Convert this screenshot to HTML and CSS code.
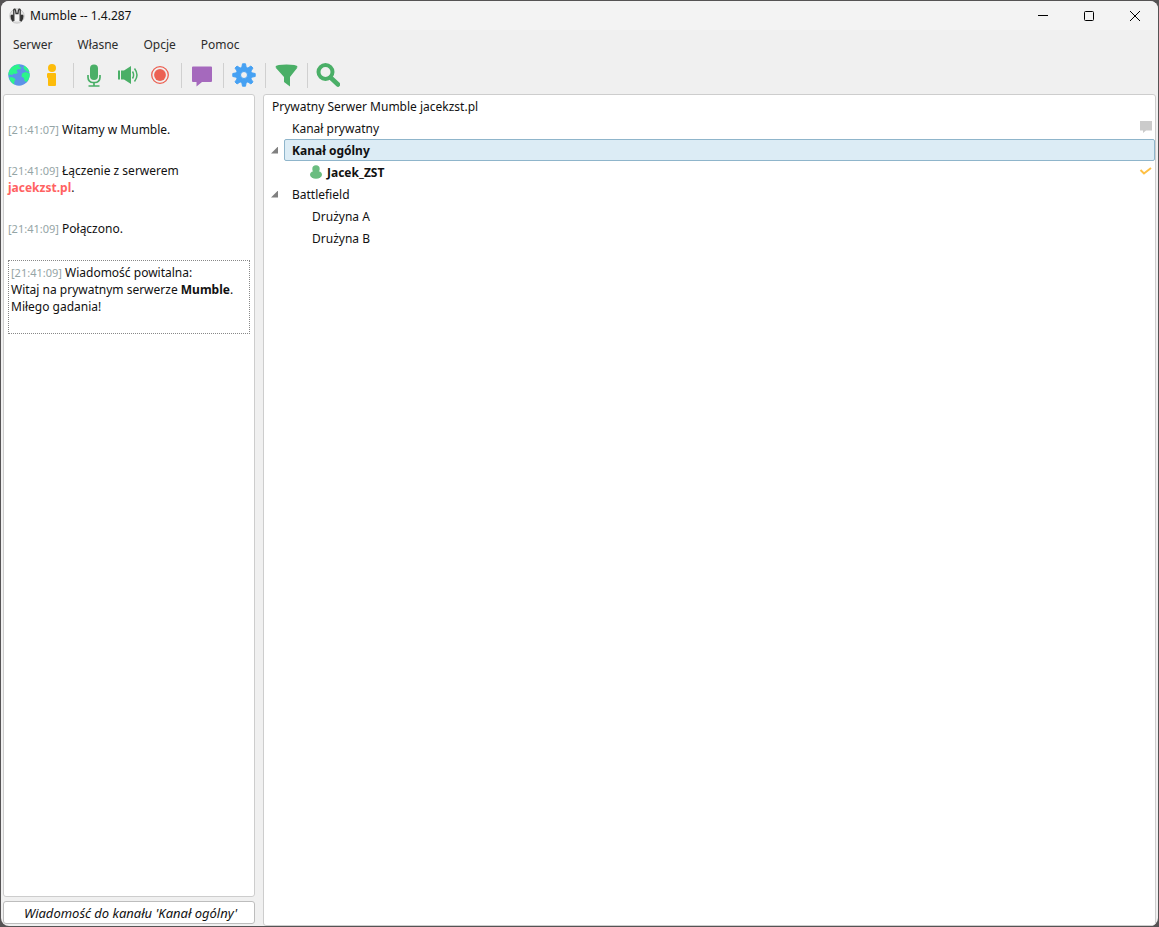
FILE: index.html
```html
<!DOCTYPE html>
<html lang="pl">
<head>
<meta charset="utf-8">
<title>Mumble -- 1.4.287</title>
<link rel="stylesheet" href="styles.css">
</head>
<body>
<div class="window">
  <header class="titlebar">
    <svg class="app-icon" viewBox="0 0 16 16" aria-hidden="true">
      <circle cx="8" cy="8" r="7.200" fill="#e4e4e4" stroke="#bbb" stroke-width=".8"/>
      <path d="M1.500 8Q1.500 6.500 3 6.500T4.800 8v4.500Q4.500 14 3.500 13.500 1.500 12 1.500 8zM14.500 8Q14.500 6.500 13 6.500T11.200 8v4.500q.3 1.500 1.300 1Q14.500 12 14.500 8z" fill="#333"/>
      <path d="M4.800 13V2Q4.800.8 6 1.200 6.800 2 7 5.500h2Q9.200 2 10 1.200q1.200-.4 1.200.8v11" fill="#f5f5f5" stroke="#333" stroke-width="1.300"/>
    </svg>
    <h1 class="title">Mumble -- 1.4.287</h1>
    <div class="controls">
      <button class="control" aria-label="Minimalizuj"><svg viewBox="0 0 12 12"><path d="M1 5.500h10"/></svg></button>
      <button class="control" aria-label="Maksymalizuj"><svg viewBox="0 0 12 12"><rect x="1.500" y="1.500" width="9" height="9" rx="1"/></svg></button>
      <button class="control" aria-label="Zamknij"><svg viewBox="0 0 12 12"><path d="M1 1l10 10M11 1L1 11"/></svg></button>
    </div>
  </header>
  <nav class="menubar">
    <button class="menu">Serwer</button>
    <button class="menu">Własne</button>
    <button class="menu">Opcje</button>
    <button class="menu">Pomoc</button>
  </nav>
  <div class="toolbar" role="toolbar">
    <div class="group">
      <button class="tool" aria-label="Połącz"><svg viewBox="0 0 24 24">
        <circle cx="12" cy="12" r="10.700" fill="#5c92e8"/>
        <path d="M3 6.200C5 3 8.500 1.300 13 1.400L12 3.500l2.500 1-1.500 2-2-.5L9.500 8 11 9.500 8.500 11l-2-.5L5.500 12 3 11.500l-1.600 1C1.300 10 1.800 8 3 6.200z" fill="#2bf58a"/>
        <path d="M2 14.500L5 14l3.500 2L7 19.500l.5 2.200Q3.500 19.500 2 14.500z" fill="#2bf58a"/>
        <path d="M17 2.500c2.800 1.400 4.800 3.700 5.500 6.500L20 8.500 18 7l-1.500-2zM15 10.500l3.500-1.500 4.200 1.500q.3 5-3.200 8.500L17.500 18l-.5-3-2.500-1.500z" fill="#2bf58a"/>
      </svg></button>
      <button class="tool" aria-label="Informacje"><svg viewBox="0 0 24 24" fill="#fdbc0b"><circle cx="12" cy="5" r="4"/><path d="M8.500 10h6.500q1 0 1 1v11q0 1-1 1H9q-1 0-1-1v-6.500q-1-.500-1-2V11q0-1 1.500-1z"/></svg></button>
    </div>
    <div class="group">
      <button class="tool" aria-label="Wycisz"><svg viewBox="0 0 24 24"><rect x="8" y="1.500" width="8" height="15.500" rx="4" fill="#4aaf67"/><path d="M6 12v2.500a5 5 0 0 0 5 5h2a5 5 0 0 0 5-5V12M12 19.500v3M6.500 23h11" fill="none" stroke="#4aaf67" stroke-width="1.700"/></svg></button>
      <button class="tool" aria-label="Ogłusz"><svg viewBox="0 0 24 24"><path d="M3 7.500h2v9H3zM6 7.500h3L16 3v18l-7-4.500H6z" fill="#4aaf67"/><path d="M17.500 8.500q2.200 3.500 0 7M19.500 5.500q5 6.500 0 13" fill="none" stroke="#4aaf67" stroke-width="1.500"/></svg></button>
      <button class="tool" aria-label="Nagrywaj"><svg viewBox="0 0 24 24"><circle cx="12" cy="12" r="8.300" fill="none" stroke="#ec6052" stroke-width="1.300"/><circle cx="12" cy="12" r="5.900" fill="#ec6052"/></svg></button>
    </div>
    <div class="group">
      <button class="tool" aria-label="Komentarz"><svg viewBox="0 0 24 24"><path d="M3 3.500h18q1 0 1 1V18q0 1-1 1H12l-5.500 4.500V19H3q-1 0-1-1V4.500q0-1 1-1z" fill="#a569bd"/></svg></button>
    </div>
    <div class="group">
      <button class="tool" aria-label="Ustawienia"><svg viewBox="0 0 24 24"><path fill="#46a1f3" stroke="#46a1f3" stroke-width="1" stroke-linejoin="round" fill-rule="evenodd" d="M10.500.8h3l.7 3.600 1.700.7 3-2.100 2.100 2.100-2.100 3 .7 1.700 3.600.7v3l-3.600.7-.7 1.700 2.100 3-2.100 2.100-3-2.100-1.700.7-.7 3.600h-3l-.7-3.600-1.700-.7-3 2.100L3 18.900l2.100-3-.7-1.700-3.600-.7v-3l3.600-.7.7-1.700L3 5.100 5.100 3l3 2.100 1.700-.7zM12 8.500a3.500 3.500 0 1 0 0 7 3.500 3.500 0 0 0 0-7z"/></svg></button>
    </div>
    <div class="group">
      <button class="tool" aria-label="Filtr"><svg viewBox="0 0 24 24"><ellipse cx="12.500" cy="3.700" rx="11" ry="2.300" fill="#4aaf67"/><path d="M1.500 4.500h22L16 14v9.500L10 19v-5z" fill="#4aaf67"/></svg></button>
    </div>
    <div class="group">
      <button class="tool" aria-label="Szukaj"><svg viewBox="0 0 24 24" fill="none" stroke="#4aaf67"><circle cx="9.500" cy="9" r="7" stroke-width="4"/><path d="M14.500 14.500L22 21.500" stroke-width="4.500" stroke-linecap="round"/></svg></button>
    </div>
  </div>
  <main class="content">
    <section class="side">
      <div class="log" role="log">
        <p class="entry"><time>[21:41:07]</time> Witamy w Mumble.</p>
        <p class="entry"><time>[21:41:09]</time> Łączenie z serwerem <b class="server">jacekzst.pl</b>.</p>
        <p class="entry"><time>[21:41:09]</time> Połączono.</p>
        <div class="welcome"><time>[21:41:09]</time> Wiadomość powitalna:<br>Witaj na prywatnym serwerze <b>Mumble</b>.<br>Miłego gadania!</div>
      </div>
      <input class="message" type="text" aria-label="Wiadomość" placeholder="Wiadomość do kanału 'Kanał ogólny'">
    </section>
    <ul class="tree" role="tree">
      <li class="row root" role="treeitem"><span class="label">Prywatny Serwer Mumble jacekzst.pl</span></li>
      <li class="row channel" role="treeitem"><span class="label">Kanał prywatny</span>
        <svg class="mark" viewBox="0 0 14 14" aria-label="Opis"><path d="M1 0h12v9.500H7L4 12V9.500H1z" fill="#cbcbcb"/></svg></li>
      <li class="row channel open selected" role="treeitem" aria-selected="true"><span class="label">Kanał ogólny</span></li>
      <li class="row user" role="treeitem">
        <svg class="person" viewBox="0 0 14 14" aria-hidden="true"><circle cx="7" cy="4" r="3.700" fill="#6abd80"/><ellipse cx="7" cy="9.700" rx="6" ry="4" fill="#6abd80"/></svg>
        <span class="label">Jacek_ZST</span>
        <svg class="mark" viewBox="0 0 14 14" aria-label="Uwierzytelniony"><path d="M1.500 5l3.500 3.500L12 3" fill="none" stroke="#fec044" stroke-width="2"/></svg></li>
      <li class="row channel open" role="treeitem"><span class="label">Battlefield</span></li>
      <li class="row sub" role="treeitem"><span class="label">Drużyna A</span></li>
      <li class="row sub" role="treeitem"><span class="label">Drużyna B</span></li>
    </ul>
  </main>
</div>
</body>
</html>
```
FILE: styles.css
```css
* { box-sizing: border-box; }
body {
  margin: 0;
  height: 100vh;
  padding: 1px;
  background: #555354;
  color: #111;
  font: 12px/17px "Noto Sans", "Open Sans", sans-serif;
}
button {
  border: 0;
  padding: 0;
  background: none;
  color: inherit;
  font: inherit;
}
.window {
  height: 100%;
  display: flex;
  flex-direction: column;
  background: #f0f0f0;
  border-radius: 8px;
  overflow: hidden;
}
.titlebar {
  display: flex;
  align-items: center;
  height: 29px;
  padding-left: 8px;
  background: #f3f3f3;
}
.app-icon { width: 16px; height: 16px; }
.title {
  margin: 0 0 0 5px;
  font-size: 12px;
  font-weight: 400;
}
.controls { display: flex; margin-left: auto; }
.control {
  display: flex;
  align-items: center;
  justify-content: center;
  width: 46px;
  height: 29px;
}
.control svg {
  width: 12px;
  height: 12px;
  fill: none;
  stroke: #000;
}
.menubar {
  display: flex;
  height: 29px;
  padding-left: 2px;
  gap: 5px;
}
.menu { padding: 0 10px; color: #2c2c2c; }
.toolbar {
  display: flex;
  align-items: center;
  height: 34px;
  padding-bottom: 2px;
}
.group {
  display: flex;
  align-items: center;
  gap: 9px;
  height: 25px;
  padding: 0 9px 0 8px;
}
.group:first-child { padding-left: 6px; }
.group + .group { border-left: 1px solid #d0d0d0; }
.tool { width: 24px; height: 24px; }
.tool svg { display: block; width: 24px; height: 24px; }
.content {
  flex: 1;
  display: flex;
  gap: 8px;
  min-height: 0;
  padding: 1px 2px 0;
}
.side {
  display: flex;
  flex-direction: column;
  gap: 4px;
  width: 252px;
  padding-bottom: 2px;
}
.log {
  flex: 1;
  padding: 26px 4px 0;
  background: #fff;
  border: 1px solid #cdcdcd;
  border-radius: 3px;
  overflow: hidden;
}
.entry { margin: 0 0 24px; padding-right: 8px; }
.entry:nth-last-child(2) { margin-bottom: 23px; }
time { color: #95a5a6; font-size: 11px; }
.server { color: #ff6262; }
.welcome {
  padding: 3px 2px 18px;
  border: 1px dotted #888;
}
.message {
  width: 100%;
  height: 23px;
  padding: 1px 8px 0 20px;
  border: 1px solid #bdbdbd;
  border-radius: 3px;
  background: #fff;
  font: italic 13px/17px "Noto Sans", "Open Sans", sans-serif;
}
.message::placeholder { color: #111; opacity: 1; }
.tree {
  flex: 1;
  margin: 0;
  padding: 0;
  list-style: none;
  background: #fff;
  border: 1px solid #cdcdcd;
  border-radius: 3px;
}
.row {
  display: flex;
  align-items: center;
  height: 22px;
}
.label {
  flex: 1;
  border: 1px solid transparent;
  border-radius: 2px;
  padding: 2px 7px 0;
  line-height: 18px;
}
.channel { padding-left: 20px; }
.user { padding-left: 45px; }
.sub { padding-left: 40px; }
.open { padding-left: 0; }
.open::before {
  content: "";
  width: 7px;
  height: 7px;
  margin: 0 6px 0 7px;
  background: #808080;
  clip-path: polygon(100% 0, 100% 100%, 0 100%);
}
.selected .label {
  border-color: #8fb5cb;
  background: #dcecf5;
  font-weight: 700;
}
.person { width: 14px; height: 14px; }
.user .label { padding-left: 3px; font-weight: 700; }
.mark { width: 14px; height: 14px; margin-right: 2px; }
```
